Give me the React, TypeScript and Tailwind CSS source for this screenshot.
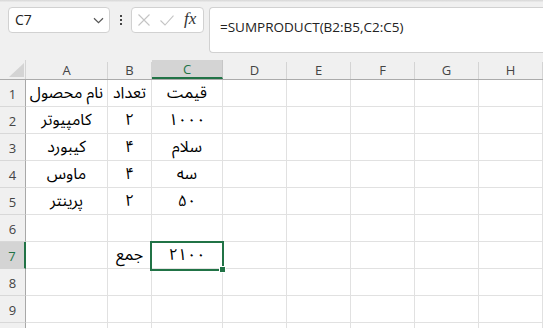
import React from "react";

const cols = [
  { key: "A", w: "w-[82px]" },
  { key: "B", w: "w-[44px]" },
  { key: "C", w: "w-[71px]" },
  { key: "D", w: "w-[64px]" },
  { key: "E", w: "w-[64px]" },
  { key: "F", w: "w-[64px]" },
  { key: "G", w: "w-[64px]" },
  { key: "H", w: "w-[64px]" },
];

const data: Record<number, string[]> = {
  1: ["نام محصول", "تعداد", "قیمت"],
  2: ["کامپیوتر", "۲", "۱۰۰۰"],
  3: ["کیبورد", "۴", "سلام"],
  4: ["ماوس", "۴", "سه"],
  5: ["پرینتر", "۲", "۵۰"],
  6: ["", "", ""],
  7: ["", "جمع", "۲۱۰۰"],
  8: ["", "", ""],
  9: ["", "", ""],
  10: ["", "", ""],
};

const uiFont = { fontFamily: '"Open Sans", "Noto Sans", sans-serif' };
const cellFont = { fontFamily: '"Noto Sans Arabic", "DejaVu Sans", sans-serif' };

export default function App() {
  const rows = [1, 2, 3, 4, 5, 6, 7, 8, 9, 10];
  return (
    <div className="w-[543px] h-[328px] overflow-hidden bg-white flex flex-col" style={uiFont}>
      {/* formula bar */}
      <div className="h-[60px] shrink-0 bg-[#f0f0f0] relative flex items-start pt-[7px] pl-[8px]">
        <div className="absolute top-0 left-0 right-0 h-[2px] bg-gradient-to-b from-[#d6d6d6] to-[#ececec]" />
        <div className="w-[102px] h-[26px] bg-white border border-[#d1d1d1] rounded-[4px] flex items-center justify-between pl-[6px] pr-[5px]">
          <span className="text-[14px] text-[#222] leading-none">C7</span>
          <svg width="11" height="7" viewBox="0 0 11 7" className="mt-[1px]">
            <path d="M1 1.2 L5.5 5.6 L10 1.2" fill="none" stroke="#555" strokeWidth="1.2" />
          </svg>
        </div>
        <div className="w-[21px] h-[26px] flex flex-col items-center justify-center gap-[2px]">
          <div className="w-[2px] h-[2px] bg-[#444]" />
          <div className="w-[2px] h-[2px] bg-[#444]" />
          <div className="w-[2px] h-[2px] bg-[#444]" />
        </div>
        <div className="w-[73px] h-[26px] bg-white border border-[#d1d1d1] rounded-[4px] flex items-center pl-[6px]">
          <svg width="12" height="12" viewBox="0 0 12 12">
            <path d="M0.5 0.5 L11.5 11.5 M11.5 0.5 L0.5 11.5" stroke="#c4c4c4" strokeWidth="1.1" fill="none" />
          </svg>
          <svg width="14" height="11" viewBox="0 0 14 11" className="ml-[10px]">
            <path d="M0.5 5.5 L5 10 L13.5 0.7" stroke="#c4c4c4" strokeWidth="1.1" fill="none" />
          </svg>
          <span
            className="ml-[10px] text-[17px] italic text-[#333] leading-none -mt-[3px]"
            style={{ fontFamily: '"Liberation Serif", serif' }}
          >
            fx
          </span>
        </div>
        <div className="ml-[5px] flex-1 h-[46px] bg-white border border-[#d1d1d1] border-r-0 rounded-l-[4px] pl-[10px] pt-[6px]">
          <span className="text-[13.5px] text-[#222] leading-[19px]">=SUMPRODUCT(B2:B5,C2:C5)</span>
        </div>
      </div>

      {/* column header */}
      <div className="h-[20px] shrink-0 flex bg-[#f0f0f0] border-b border-[#ababab]">
        <div className="w-[26px] h-full border-r border-[#d4d4d4] relative shrink-0">
          <svg width="15" height="14" viewBox="0 0 15 14" className="absolute right-[1px] bottom-[2px]">
            <path d="M15 0 L15 14 L0 14 Z" fill="#d4d4d4" />
          </svg>
        </div>
        {cols.map((c) =>
          c.key === "C" ? (
            <div
              key={c.key}
              className={`${c.w} shrink-0 h-full bg-[#d4d4d4] border-r border-[#c6c6c6] border-b-2 border-b-[#217346] flex items-center justify-center text-[13px] text-[#217346] leading-none`}
            >
              <span className="mt-[2px]">C</span>
            </div>
          ) : (
            <div key={c.key} className={`${c.w} shrink-0 h-full flex items-end`}>
              <div className="w-full h-[17px] border-r border-[#d4d4d4] flex items-center justify-center text-[13px] text-[#444] leading-none">
                <span className="-mt-[1px]">{c.key}</span>
              </div>
            </div>
          )
        )}
      </div>

      {/* rows */}
      {rows.map((r) => (
        <div key={r} className="h-[27px] shrink-0 flex">
          <div
            className={
              r === 7
                ? "w-[26px] shrink-0 h-full bg-[#d4d4d4] border-r-2 border-r-[#217346] border-b border-b-[#d4d4d4] flex items-end justify-center pb-[3px] text-[13px] text-[#217346] leading-none"
                : "w-[26px] shrink-0 h-full bg-[#f0f0f0] border-r border-r-[#a8a8a8] border-b border-b-[#d8d8d8] flex items-end justify-center pb-[3px] text-[13px] text-[#444] leading-none"
            }
          >
            {r < 10 && <span className="pb-[2px]">{r}</span>}
          </div>
          {cols.map((c, i) => {
            const text = data[r][i] ?? "";
            const sel = r === 7 && c.key === "C";
            return (
              <div
                key={c.key}
                className={`${c.w} shrink-0 h-full border-r border-b border-[#e1e1e1] relative flex items-end justify-center pb-[4px]`}
              >
                {text && (
                  <span dir="rtl" className="text-[16px] text-black leading-[18px]" style={cellFont}>
                    {text}
                  </span>
                )}
                {sel && (
                  <>
                    <div className="absolute left-[-2px] top-[-1px] w-[74px] h-[30px] border-2 border-[#217346] z-10" />
                    <div className="absolute left-[67px] top-[24px] w-[7px] h-[7px] bg-[#217346] border border-white z-20" />
                  </>
                )}
              </div>
            );
          })}
        </div>
      ))}
    </div>
  );
}
